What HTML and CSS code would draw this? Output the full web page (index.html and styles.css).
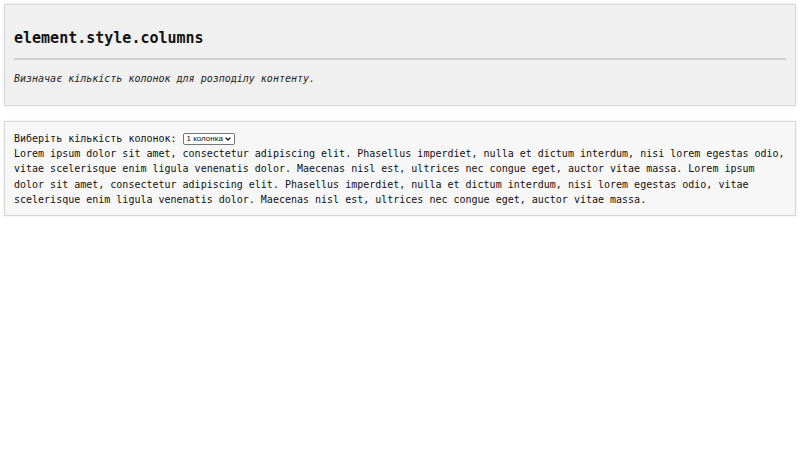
FILE: index.html
```html
<!DOCTYPE html>
<html lang="uk">
<head>
<meta charset="utf-8">
<title>element.style.columns</title>
<link rel="stylesheet" href="styles.css">
</head>
<body>
<div class="header">
  <h1 class="title">element.style.columns</h1>
  <hr class="rule">
  <p class="desc">Визначає кількість колонок для розподілу контенту.</p>
</div>
<div class="demo">
  <label class="label">Виберіть кількість колонок: <select class="picker">
    <option>1 колонка</option>
    <option>2 колонки</option>
    <option>3 колонки</option>
  </select></label>
  <div class="text">Lorem ipsum dolor sit amet, consectetur adipiscing elit. Phasellus imperdiet, nulla et dictum interdum, nisi lorem egestas odio, vitae scelerisque enim ligula venenatis dolor. Maecenas nisl est, ultrices nec congue eget, auctor vitae massa. Lorem ipsum dolor sit amet, consectetur adipiscing elit. Phasellus imperdiet, nulla et dictum interdum, nisi lorem egestas odio, vitae scelerisque enim ligula venenatis dolor. Maecenas nisl est, ultrices nec congue eget, auctor vitae massa.</div>
</div>
</body>
</html>
```
FILE: styles.css
```css
html, body {
  margin: 0;
  padding: 0;
  background: #ffffff;
}
body {
  padding: 4px;
  font-family: "DejaVu Sans Mono", monospace;
  font-size: 10px;
  color: #111;
  display: flex;
  flex-direction: column;
  gap: 15px;
}
.header {
  background: #f0f0f0;
  border: 1px solid #d8d8d8;
  box-shadow: 0 0 2px rgba(0,0,0,0.12);
  padding: 20px 9px 18px;
}
.title {
  margin: 0;
  font-size: 15px;
  font-weight: bold;
  line-height: 26px;
  color: #111;
}
.rule {
  margin: 7px 0 11px;
  border: 0;
  border-top: 2px solid #cfcfcf;
  height: 0;
}
.desc {
  margin: 0;
  font-style: italic;
  line-height: 16px;
  color: #222;
}
.demo {
  background: #f7f7f7;
  border: 1px solid #d8d8d8;
  box-shadow: 0 0 2px rgba(0,0,0,0.12);
  padding: 9px 9px 7px;
}
.label {
  display: block;
  line-height: 15px;
}
.picker {
  appearance: none;
  -webkit-appearance: none;
  font-family: "Liberation Sans", Arial, sans-serif;
  font-size: 8px;
  color: #111;
  width: 52px;
  height: 12px;
  line-height: 10px;
  padding: 0 0 0 3px;
  border: 1px solid #767676;
  border-radius: 2px;
  background-color: #fff;
  background-image: url("data:image/svg+xml,%3Csvg xmlns='http://www.w3.org/2000/svg' width='6' height='4' viewBox='0 0 6 4'%3E%3Cpath d='M0.6 0.6 L3 3 L5.4 0.6' fill='none' stroke='%23111' stroke-width='1.3'/%3E%3C/svg%3E");
  background-repeat: no-repeat;
  background-position: right 3px center;
  background-size: 6px 4px;
  vertical-align: middle;
}
.text {
  line-height: 15.4px;
}
```
